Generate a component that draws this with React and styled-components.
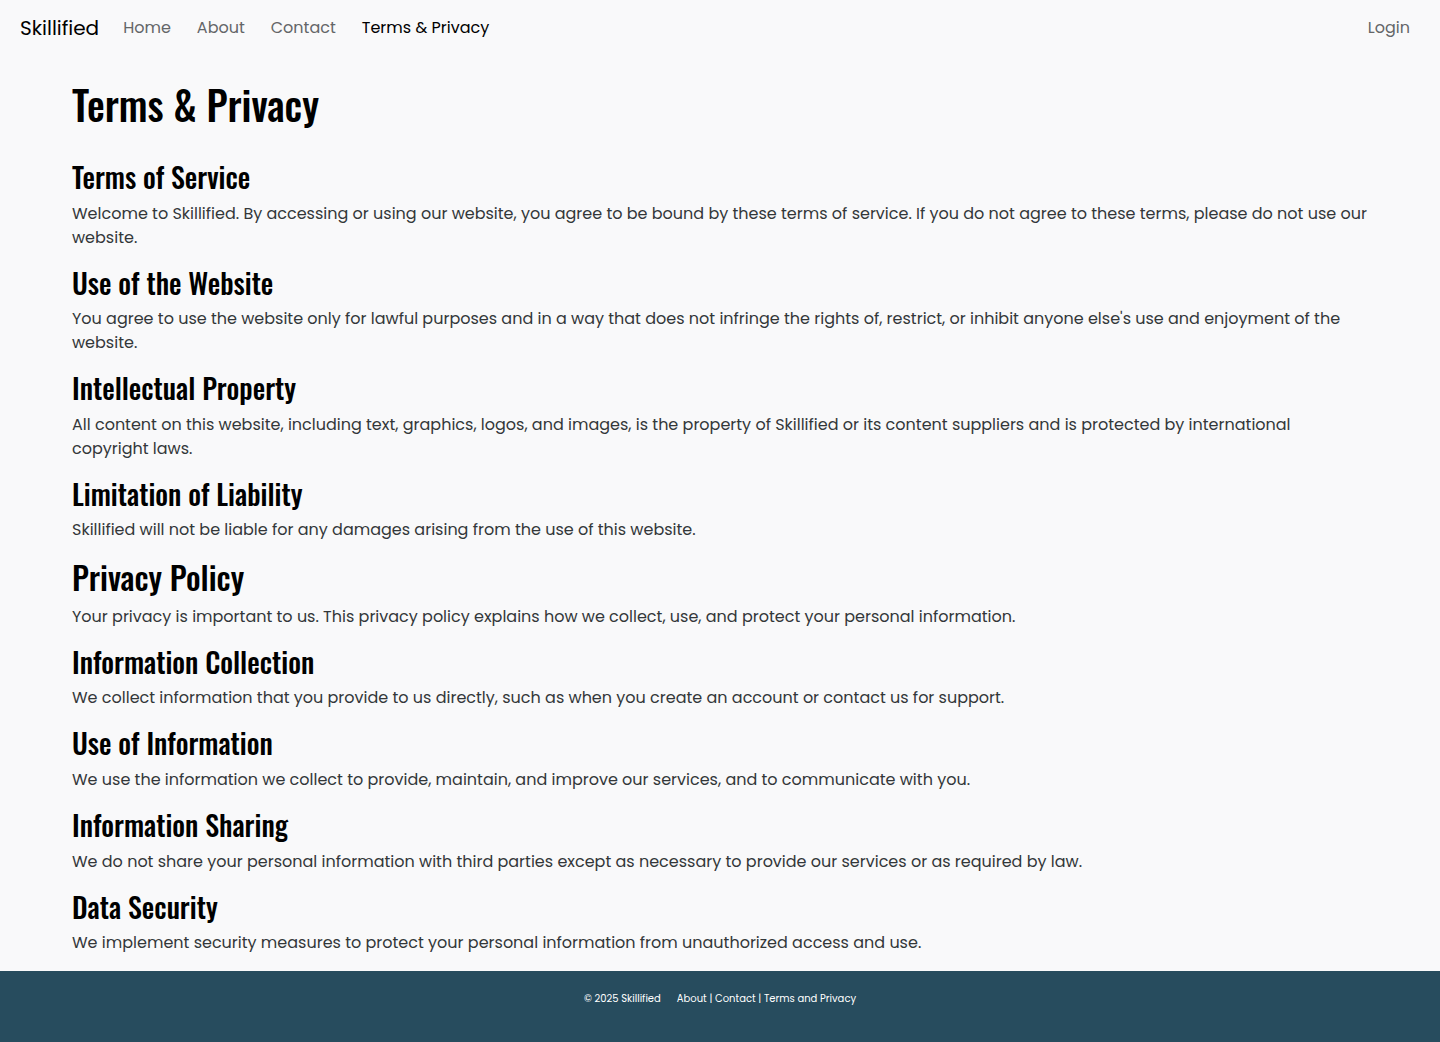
import React from "react";
import styled, { createGlobalStyle } from "styled-components";

const bodyFont = `Poppins, Inter, "Open Sans", sans-serif`;
const headingFont = `Oswald, "Liberation Sans Narrow", Roboto, sans-serif`;

const GlobalStyle = createGlobalStyle`
  *, *::before, *::after { box-sizing: border-box; }
  body {
    margin: 0;
    background: #f9f9fa;
    color: #333739;
    font-family: ${bodyFont};
    font-size: 16px;
    line-height: 24px;
  }
`;

const Page = styled.div`
  display: flex;
  flex-direction: column;
  min-height: 100vh;
`;

const Navbar = styled.nav`
  display: flex;
  align-items: center;
  min-height: 56px;
  padding: 0 20px;
`;

const Brand = styled.a`
  margin-right: 14px;
  color: #000;
  font-size: 20px;
  line-height: 30px;
  text-decoration: none;
`;

const NavList = styled.ul`
  display: flex;
  flex: 1;
  gap: 6px;
  margin: 0;
  padding: 0;
  list-style: none;
`;

const NavItem = styled.li`
  margin-left: ${({ $end }) => ($end ? "auto" : "0")};
`;

const NavLink = styled.a`
  display: block;
  padding: 8px 10px;
  color: ${({ $active }) => ($active ? "#000" : "#646668")};
  text-decoration: none;
`;

const Main = styled.main`
  flex: 1;
  padding: 24px 72px 0;
`;

const Title = styled.h1`
  margin: 0 0 32px;
  color: #000;
  font-family: ${headingFont};
  font-size: 40px;
  font-weight: 500;
  line-height: 1.2;
`;

const Heading = styled.h3`
  margin: 0 0 8px;
  color: #000;
  font-family: ${headingFont};
  font-size: 28px;
  font-weight: 500;
  line-height: 1.2;
`;

const PolicyHeading = styled(Heading)`
  font-size: 32px;
`;

const Text = styled.p`
  margin: 0 0 16px;
`;

const Footer = styled.footer`
  display: flex;
  justify-content: center;
  gap: 16px;
  min-height: 71px;
  padding: 20px;
  background: #274c5e;
  color: #fff;
  font-size: 10px;
  line-height: 15px;
`;

const FooterLink = styled.a`
  color: inherit;
  text-decoration: none;
`;

const navLinks = ["Home", "About", "Contact", "Terms & Privacy"];

const sections = [
  { title: "Terms of Service", text: "Welcome to Skillified. By accessing or using our website, you agree to be bound by these terms of service. If you do not agree to these terms, please do not use our website." },
  { title: "Use of the Website", text: "You agree to use the website only for lawful purposes and in a way that does not infringe the rights of, restrict, or inhibit anyone else's use and enjoyment of the website." },
  { title: "Intellectual Property", text: "All content on this website, including text, graphics, logos, and images, is the property of Skillified or its content suppliers and is protected by international copyright laws." },
  { title: "Limitation of Liability", text: "Skillified will not be liable for any damages arising from the use of this website." },
  { title: "Privacy Policy", major: true, text: "Your privacy is important to us. This privacy policy explains how we collect, use, and protect your personal information." },
  { title: "Information Collection", text: "We collect information that you provide to us directly, such as when you create an account or contact us for support." },
  { title: "Use of Information", text: "We use the information we collect to provide, maintain, and improve our services, and to communicate with you." },
  { title: "Information Sharing", text: "We do not share your personal information with third parties except as necessary to provide our services or as required by law." },
  { title: "Data Security", text: "We implement security measures to protect your personal information from unauthorized access and use." },
];

export default function App() {
  return (
    <Page>
      <GlobalStyle />
      <Navbar>
        <Brand href="#">Skillified</Brand>
        <NavList>
          {navLinks.map((label) => (
            <NavItem key={label}>
              <NavLink href="#" $active={label === "Terms & Privacy"}>{label}</NavLink>
            </NavItem>
          ))}
          <NavItem $end>
            <NavLink href="#">Login</NavLink>
          </NavItem>
        </NavList>
      </Navbar>
      <Main>
        <Title>Terms &amp; Privacy</Title>
        {sections.map(({ title, text, major }) => (
          <section key={title}>
            {major ? <PolicyHeading as="h2">{title}</PolicyHeading> : <Heading>{title}</Heading>}
            <Text>{text}</Text>
          </section>
        ))}
      </Main>
      <Footer>
        <span>© 2025 Skillified</span>
        <span>
          <FooterLink href="#">About</FooterLink> | <FooterLink href="#">Contact</FooterLink> |{" "}
          <FooterLink href="#">Terms and Privacy</FooterLink>
        </span>
      </Footer>
    </Page>
  );
}
